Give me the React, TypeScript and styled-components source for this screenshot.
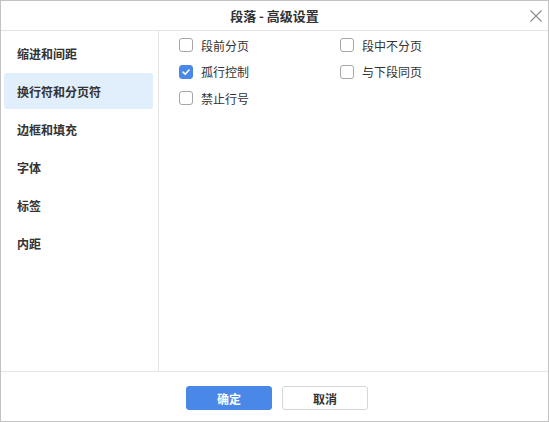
import React, { useState } from "react";
import styled, { createGlobalStyle } from "styled-components";

const GlobalStyle = createGlobalStyle`
  html, body {
    margin: 0;
    padding: 0;
    background: #ffffff;
  }
  * {
    box-sizing: border-box;
  }
`;

const Dialog = styled.div`
  width: 549px;
  height: 422px;
  border: 1px solid #c2c2c2;
  background: #ffffff;
  display: flex;
  flex-direction: column;
  font-family: "Noto Sans CJK SC", "Liberation Sans", sans-serif;
  color: #333333;
`;

const Header = styled.div`
  height: 30px;
  flex: none;
  border-bottom: 1px solid #e4e4e4;
  display: flex;
  align-items: center;
  justify-content: center;
  position: relative;
`;

const Title = styled.h1`
  margin: 0;
  font-size: 13px;
  font-weight: 700;
  color: #333333;
  line-height: 1;
`;

const CloseButton = styled.button`
  position: absolute;
  right: 5px;
  top: 8px;
  width: 14px;
  height: 14px;
  padding: 0;
  border: none;
  background: transparent;
  cursor: pointer;
  display: flex;
`;

const Body = styled.div`
  flex: 1;
  display: flex;
  min-height: 0;
`;

const Sidebar = styled.ul`
  list-style: none;
  margin: 0;
  width: 158px;
  flex: none;
  padding: 4px 5px 0 3px;
  border-right: 1px solid #e4e4e4;
  display: flex;
  flex-direction: column;
  gap: 2px;
`;

const NavItem = styled.li<{ $active?: boolean }>`
  height: 36px;
  padding-left: 13px;
  display: flex;
  align-items: center;
  border-radius: 3px;
  font-size: 12px;
  font-weight: 700;
  color: #333333;
  background: ${(props) => (props.$active ? "#e1eefb" : "transparent")};
  cursor: pointer;
`;

const Content = styled.div`
  flex: 1;
  padding: 1px 0 0 20px;
  display: grid;
  grid-template-columns: 161px 1fr;
  grid-auto-rows: 26.5px;
  align-content: start;
`;

const Option = styled.label`
  display: flex;
  align-items: center;
  gap: 8px;
  font-size: 12px;
  color: #333333;
  cursor: pointer;
  user-select: none;
`;

const Box = styled.span<{ $checked?: boolean }>`
  width: 14px;
  height: 14px;
  flex: none;
  border-radius: 3px;
  border: 1px solid ${(props) => (props.$checked ? "#4a88e8" : "#a6a6a6")};
  background: ${(props) => (props.$checked ? "#4a88e8" : "#ffffff")};
  display: flex;
  align-items: center;
  justify-content: center;
`;

const Footer = styled.div`
  height: 50px;
  flex: none;
  border-top: 1px solid #e4e4e4;
  display: flex;
  justify-content: center;
  gap: 10px;
  padding: 14px 0 0 5px;
`;

const Button = styled.button<{ $primary?: boolean }>`
  width: 86px;
  height: 24px;
  border-radius: 3px;
  font-family: "Noto Sans CJK SC", "Liberation Sans", sans-serif;
  font-size: 12px;
  font-weight: 700;
  cursor: pointer;
  border: 1px solid ${(props) => (props.$primary ? "#4a88e8" : "#d6d6d6")};
  background: ${(props) => (props.$primary ? "#4a88e8" : "#ffffff")};
  color: ${(props) => (props.$primary ? "#ffffff" : "#333333")};
`;

const navItems = ["缩进和间距", "换行符和分页符", "边框和填充", "字体", "标签", "内距"];

const options = [
  { label: "段前分页", checked: false },
  { label: "段中不分页", checked: false },
  { label: "孤行控制", checked: true },
  { label: "与下段同页", checked: false },
  { label: "禁止行号", checked: false },
];

const CheckOption = ({ label, initial }: { label: string; initial: boolean }) => {
  const [checked, setChecked] = useState(initial);
  return (
    <Option onClick={() => setChecked(!checked)}>
      <Box $checked={checked}>
        {checked && (
          <svg width="10" height="10" viewBox="0 0 10 10">
            <path d="M2 5.2 L4.2 7.2 L8 3" fill="none" stroke="#ffffff" strokeWidth="1.6" strokeLinecap="round" strokeLinejoin="round" />
          </svg>
        )}
      </Box>
      {label}
    </Option>
  );
};

const App = () => {
  const [active, setActive] = useState(1);
  return (
    <>
      <GlobalStyle />
      <Dialog>
        <Header>
          <Title>段落 - 高级设置</Title>
          <CloseButton aria-label="关闭">
            <svg width="14" height="14" viewBox="0 0 14 14">
              <path d="M1.5 1.5 L12.5 12.5 M12.5 1.5 L1.5 12.5" stroke="#8c8c8c" strokeWidth="1.1" />
            </svg>
          </CloseButton>
        </Header>
        <Body>
          <Sidebar>
            {navItems.map((item, i) => (
              <NavItem key={item} $active={i === active} onClick={() => setActive(i)}>
                {item}
              </NavItem>
            ))}
          </Sidebar>
          <Content>
            {options.map((o) => (
              <CheckOption key={o.label} label={o.label} initial={o.checked} />
            ))}
          </Content>
        </Body>
        <Footer>
          <Button $primary>确定</Button>
          <Button>取消</Button>
        </Footer>
      </Dialog>
    </>
  );
};

export default App;
